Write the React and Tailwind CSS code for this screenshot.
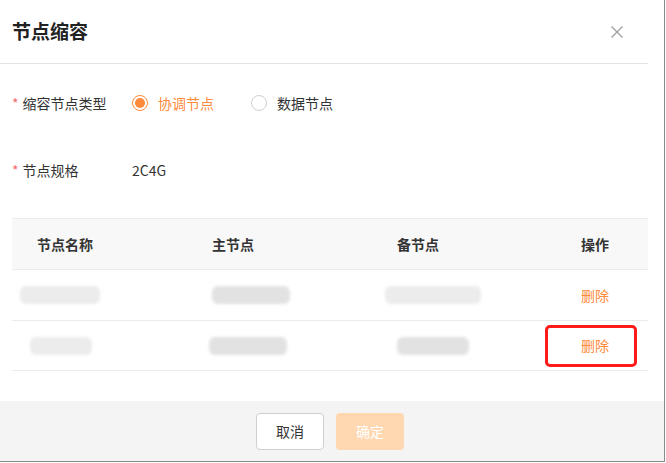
const font = { fontFamily: '"Microsoft YaHei", "Noto Sans CJK SC", "Noto Sans", sans-serif' };

const Blob = ({ w, light, offset = 0 }) => (
  <div className="flex items-center" style={{ marginLeft: offset }}>
    <div className={`h-[18px] rounded-[6px] blur-[1.5px] ${light ? 'bg-[#ececec]' : 'bg-[#e2e2e2]'}`} style={{ width: w }} />
  </div>
);

const Radio = ({ checked, label }) => (
  <label className="flex items-center gap-[10px] cursor-pointer">
    <span
      className={`w-4 h-4 rounded-full flex items-center justify-center border ${
        checked ? 'border-[#ff8a3c]' : 'border-[#cfcfcf]'
      }`}
    >
      {checked && <span className="w-[10px] h-[10px] rounded-full bg-[#ff8a3c]" />}
    </span>
    <span className={checked ? 'text-[#ff8a3c]' : 'text-[#333]'}>{label}</span>
  </label>
);

export default function App() {
  return (
    <div className="w-[666px] h-[463px] bg-white" style={font}>
      <div className="w-[665px] h-[462px] flex flex-col border-r border-b border-[#8c8c8c]">
        {/* Header */}
        <div className="w-[648px] h-[64px] shrink-0 flex items-center justify-between pl-3 border-b border-[#e4e4e4]">
          <h1 className="text-[19px] font-bold text-[#222]">节点缩容</h1>
          <button className="mr-[24px] text-[#a0a0a0]">
            <svg width="14" height="14" viewBox="0 0 14 14" fill="none" stroke="currentColor" strokeWidth="1.4">
              <path d="M1.5 1.5l11 11M12.5 1.5l-11 11" />
            </svg>
          </button>
        </div>

        {/* Form */}
        <div className="flex-1 px-3 text-[14px] text-[#333]">
          <div className="flex items-center h-[40px] mt-[19px]">
            <div className="w-[120px] flex items-center">
              <span className="text-[#f56c6c] mr-[4px]">*</span>
              <span>缩容节点类型</span>
            </div>
            <div className="flex items-center gap-[37px]">
              <Radio checked label="协调节点" />
              <Radio label="数据节点" />
            </div>
          </div>

          <div className="flex items-center h-[40px] mt-[27px]">
            <div className="w-[120px] flex items-center">
              <span className="text-[#f56c6c] mr-[4px]">*</span>
              <span>节点规格</span>
            </div>
            <span>2C4G</span>
          </div>

          {/* Table */}
          <div className="w-[636px] mt-[28px]">
            <div className="grid grid-cols-[175px_185px_184px_92px] h-[52px] items-center bg-[#f8f8f8] border-t border-b border-[#ebebeb] font-bold text-[#333]">
              <div className="pl-[25px]">节点名称</div>
              <div className="pl-[25px]">主节点</div>
              <div className="pl-[25px]">备节点</div>
              <div className="pl-[25px]">操作</div>
            </div>

            <div className="grid grid-cols-[175px_185px_184px_92px] h-[51px] items-center border-b border-[#ebebeb]">
              <Blob w={80} light offset={8} />
              <Blob w={78} offset={25} />
              <Blob w={96} light offset={13} />
              <div className="pl-[25px] text-[#ff8a3c]">删除</div>
            </div>

            <div className="grid grid-cols-[175px_185px_184px_92px] h-[50px] items-center border-b border-[#ebebeb]">
              <Blob w={62} light offset={18} />
              <Blob w={78} offset={22} />
              <Blob w={72} offset={25} />
              <div className="relative h-full flex items-center pl-[25px] text-[#ff8a3c]">
                删除
                <div className="absolute left-[-11px] top-[4px] w-[92px] h-[42px] border-[3px] border-[#ff1a1a] rounded-[5px]" />
              </div>
            </div>
          </div>
        </div>

        {/* Footer */}
        <div className="h-[60px] shrink-0 bg-[#f4f4f4] flex items-center justify-center gap-3 pr-[4px]">
          <button className="w-[68px] h-[37px] bg-white border border-[#cfcfcf] rounded-[4px] text-[14px] text-[#333]">
            取消
          </button>
          <button className="w-[68px] h-[37px] bg-[#ffd8b2] rounded-[4px] text-[14px] text-white" disabled>
            确定
          </button>
        </div>
      </div>
    </div>
  );
}
